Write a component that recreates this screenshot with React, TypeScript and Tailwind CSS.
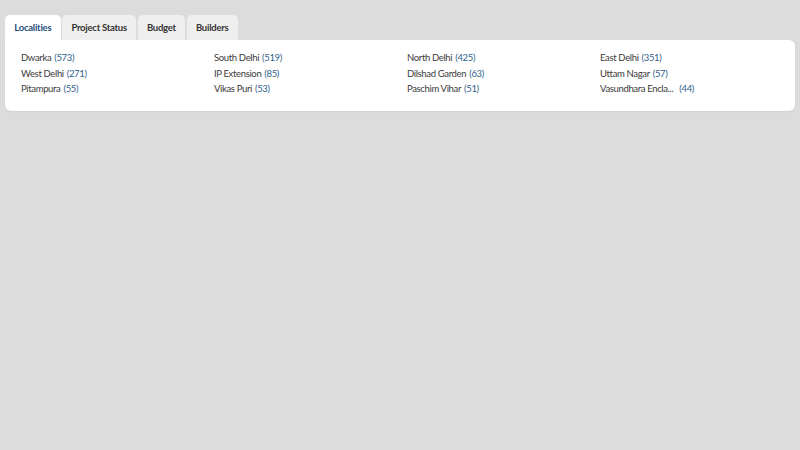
import React from "react";

const data: [string, number, boolean?][] = [
  ["Dwarka", 573],
  ["South Delhi", 519],
  ["North Delhi", 425],
  ["East Delhi", 351],
  ["West Delhi", 271],
  ["IP Extension", 85],
  ["Dilshad Garden", 63],
  ["Uttam Nagar", 57],
  ["Pitampura", 55],
  ["Vikas Puri", 53],
  ["Paschim Vihar", 51],
  ["Vasundhara Encla...", 44, true],
];

const tabs = ["Localities", "Project Status", "Budget", "Builders"];

export default function App() {
  return (
    <div
      className="min-h-[450px] w-[800px] bg-[#dcdcdc] pt-[15px] px-[5px]"
      style={{ fontFamily: 'Lato, "Noto Sans", sans-serif' }}
    >
      <div className="flex gap-[1.5px]">
        {tabs.map((t, i) => (
          <div
            key={t}
            className={
              i === 0
                ? "h-[25px] px-[9.3px] pt-[2px] flex items-center rounded-t-[5px] bg-white text-[9.5px] tracking-[-0.25px] font-bold text-[#1f4e79]"
                : "h-[25px] px-[9.3px] pt-[2px] flex items-center rounded-t-[5px] bg-[#efefef] text-[9.5px] tracking-[-0.25px] font-bold text-[#333333]"
            }
          >
            {t}
          </div>
        ))}
      </div>
      <div className="bg-white rounded-b-[6px] rounded-tr-[6px] pl-[16px] pt-[12px] pb-[15px] shadow-[0_1px_2px_rgba(0,0,0,0.05)]">
        <div className="grid grid-cols-[193px_193px_193px_193px] gap-y-[3px]">
          {data.map(([name, n, trunc]) => (
            <div key={name} className="text-[9.5px] tracking-[-0.35px] leading-[12.5px] text-[#3a3a3a] whitespace-nowrap">
              {name}
              <span className={trunc ? "ml-[6px] text-[#2f5f8a]" : "ml-[3px] text-[#2f5f8a]"}>({n})</span>
            </div>
          ))}
        </div>
      </div>
    </div>
  );
}
